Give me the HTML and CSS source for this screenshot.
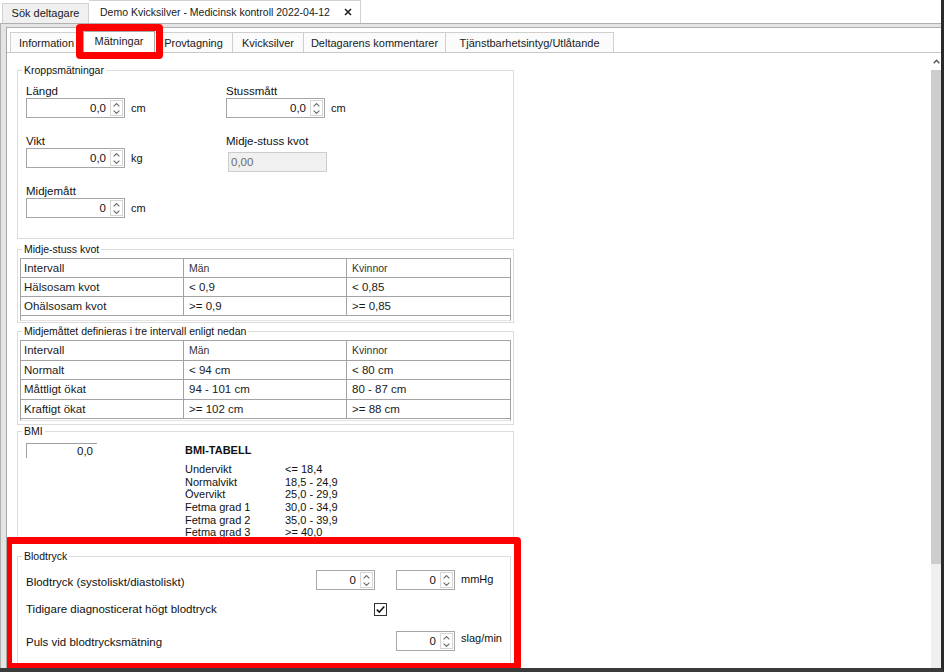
FILE: index.html
```html
<!DOCTYPE html>
<html lang="sv">
<head>
<meta charset="utf-8">
<title>Mätningar</title>
<link rel="stylesheet" href="styles.css">
</head>
<body>
<div class="app">
  <div class="doc-tabs">
    <div class="doc-tab search">Sök deltagare</div>
    <div class="doc-tab active"><span class="doc-title">Demo Kvicksilver - Medicinsk kontroll 2022-04-12</span>
      <svg class="close" width="8" height="8" viewBox="0 0 8 8"><path d="M1 1L7 7M7 1L1 7" stroke="#222" stroke-width="1.6" fill="none"/></svg>
    </div>
  </div>
  <div class="doc-body">
    <div class="inner">
      <div class="tabs">
        <div class="tab t-info">Information</div>
        <div class="tab t-mat active">Mätningar</div>
        <div class="tab t-prov">Provtagning</div>
        <div class="tab t-kvick">Kvicksilver</div>
        <div class="tab t-delt">Deltagarens kommentarer</div>
        <div class="tab t-tjan">Tjänstbarhetsintyg/Utlåtande</div>
      </div>
      <div class="page">
        <div class="content">
          <fieldset class="group kropp">
            <legend>Kroppsmätningar</legend>
            <div class="kropp-grid">
              <div class="field">
                <div class="lbl">Längd</div>
                <div class="spin">
                  <div class="spinbox w99"><span class="val">0,0</span><span class="arrows"><span><svg width="7" height="4" viewBox="0 0 7 4"><path d="M0.6 3.4L3.5 0.6L6.4 3.4" fill="none" stroke="#666" stroke-width="1.1"/></svg></span><span><svg width="7" height="4" viewBox="0 0 7 4"><path d="M0.6 0.6L3.5 3.4L6.4 0.6" fill="none" stroke="#666" stroke-width="1.1"/></svg></span></span></div>
                  <span class="unit">cm</span>
                </div>
              </div>
              <div class="field">
                <div class="lbl">Stussmått</div>
                <div class="spin">
                  <div class="spinbox w99"><span class="val">0,0</span><span class="arrows"><span><svg width="7" height="4" viewBox="0 0 7 4"><path d="M0.6 3.4L3.5 0.6L6.4 3.4" fill="none" stroke="#666" stroke-width="1.1"/></svg></span><span><svg width="7" height="4" viewBox="0 0 7 4"><path d="M0.6 0.6L3.5 3.4L6.4 0.6" fill="none" stroke="#666" stroke-width="1.1"/></svg></span></span></div>
                  <span class="unit">cm</span>
                </div>
              </div>
              <div class="field">
                <div class="lbl">Vikt</div>
                <div class="spin">
                  <div class="spinbox w99"><span class="val">0,0</span><span class="arrows"><span><svg width="7" height="4" viewBox="0 0 7 4"><path d="M0.6 3.4L3.5 0.6L6.4 3.4" fill="none" stroke="#666" stroke-width="1.1"/></svg></span><span><svg width="7" height="4" viewBox="0 0 7 4"><path d="M0.6 0.6L3.5 3.4L6.4 0.6" fill="none" stroke="#666" stroke-width="1.1"/></svg></span></span></div>
                  <span class="unit">kg</span>
                </div>
              </div>
              <div class="field">
                <div class="lbl">Midje-stuss kvot</div>
                <div class="ro">0,00</div>
              </div>
              <div class="field">
                <div class="lbl">Midjemått</div>
                <div class="spin">
                  <div class="spinbox w99"><span class="val">0</span><span class="arrows"><span><svg width="7" height="4" viewBox="0 0 7 4"><path d="M0.6 3.4L3.5 0.6L6.4 3.4" fill="none" stroke="#666" stroke-width="1.1"/></svg></span><span><svg width="7" height="4" viewBox="0 0 7 4"><path d="M0.6 0.6L3.5 3.4L6.4 0.6" fill="none" stroke="#666" stroke-width="1.1"/></svg></span></span></div>
                  <span class="unit">cm</span>
                </div>
              </div>
            </div>
          </fieldset>

          <fieldset class="group kvot">
            <legend>Midje-stuss kvot</legend>
            <div class="grid g-kvot">
              <div class="row head"><div>Intervall</div><div class="sm">Män</div><div class="sm">Kvinnor</div></div>
              <div class="row"><div>Hälsosam kvot</div><div>&lt; 0,9</div><div>&lt; 0,85</div></div>
              <div class="row"><div>Ohälsosam kvot</div><div>&gt;= 0,9</div><div>&gt;= 0,85</div></div>
            </div>
          </fieldset>

          <fieldset class="group midje">
            <legend>Midjemåttet definieras i tre intervall enligt nedan</legend>
            <div class="grid g-midje">
              <div class="row head"><div>Intervall</div><div class="sm">Män</div><div class="sm">Kvinnor</div></div>
              <div class="row"><div>Normalt</div><div>&lt; 94 cm</div><div>&lt; 80 cm</div></div>
              <div class="row"><div>Måttligt ökat</div><div>94 - 101 cm</div><div>80 - 87 cm</div></div>
              <div class="row"><div>Kraftigt ökat</div><div>&gt;= 102 cm</div><div>&gt;= 88 cm</div></div>
            </div>
          </fieldset>

          <div class="bmi-clip">
            <fieldset class="group bmi">
              <legend>BMI</legend>
              <div class="bmi-row">
                <div class="bmi-val">0,0</div>
                <div class="bmi-table">
                  <div class="bmi-title">BMI-TABELL</div>
                  <div class="bmi-list">
                    <span>Undervikt</span><span>&lt;= 18,4</span>
                    <span>Normalvikt</span><span>18,5 - 24,9</span>
                    <span>Övervikt</span><span>25,0 - 29,9</span>
                    <span>Fetma grad 1</span><span>30,0 - 34,9</span>
                    <span>Fetma grad 2</span><span>35,0 - 39,9</span>
                    <span>Fetma grad 3</span><span>&gt;= 40,0</span>
                  </div>
                </div>
              </div>
            </fieldset>
          </div>

          <div class="bp-frame">
            <fieldset class="group bp">
              <legend>Blodtryck</legend>
              <div class="bp-row r1">
                <span class="bp-lbl l1">Blodtryck (systoliskt/diastoliskt)</span>
                <div class="spinbox w59"><span class="val">0</span><span class="arrows"><span><svg width="7" height="4" viewBox="0 0 7 4"><path d="M0.6 3.4L3.5 0.6L6.4 3.4" fill="none" stroke="#666" stroke-width="1.1"/></svg></span><span><svg width="7" height="4" viewBox="0 0 7 4"><path d="M0.6 0.6L3.5 3.4L6.4 0.6" fill="none" stroke="#666" stroke-width="1.1"/></svg></span></span></div>
                <div class="spinbox w59 second"><span class="val">0</span><span class="arrows"><span><svg width="7" height="4" viewBox="0 0 7 4"><path d="M0.6 3.4L3.5 0.6L6.4 3.4" fill="none" stroke="#666" stroke-width="1.1"/></svg></span><span><svg width="7" height="4" viewBox="0 0 7 4"><path d="M0.6 0.6L3.5 3.4L6.4 0.6" fill="none" stroke="#666" stroke-width="1.1"/></svg></span></span></div>
                <span class="bp-unit u1">mmHg</span>
              </div>
              <div class="bp-row r2">
                <span class="bp-lbl l2">Tidigare diagnosticerat högt blodtryck</span>
                <span class="check"><svg width="11" height="11" viewBox="0 0 11 11"><path d="M1.8 5.6L4.3 8.1L9.3 2.6" fill="none" stroke="#111" stroke-width="1.5"/></svg></span>
              </div>
              <div class="bp-row r3">
                <span class="bp-lbl l3">Puls vid blodtrycksmätning</span>
                <div class="spinbox w59"><span class="val">0</span><span class="arrows"><span><svg width="7" height="4" viewBox="0 0 7 4"><path d="M0.6 3.4L3.5 0.6L6.4 3.4" fill="none" stroke="#666" stroke-width="1.1"/></svg></span><span><svg width="7" height="4" viewBox="0 0 7 4"><path d="M0.6 0.6L3.5 3.4L6.4 0.6" fill="none" stroke="#666" stroke-width="1.1"/></svg></span></span></div>
                <span class="bp-unit u3">slag/min</span>
              </div>
            </fieldset>
          </div>
        </div>
        <div class="scrollbar">
          <div class="sb-up"><svg width="7" height="5" viewBox="0 0 7 5"><path d="M0.7 4.2L3.5 1.2L6.3 4.2" fill="none" stroke="#555" stroke-width="1.4"/></svg></div>
          <div class="sb-thumb"></div>
          <div class="sb-track"></div>
        </div>
      </div>
    </div>
  </div>
  <div class="hl-tab"></div>
</div>
</body>
</html>
```

FILE: styles.css
```css
html, body {
  margin: 0;
  padding: 0;
  background: #fff;
}
body {
  font-family: "Liberation Sans", Arial, sans-serif;
  color: #111;
}
.app {
  position: relative;
  width: 944px;
  height: 672px;
  box-sizing: border-box;
  border-right: 3px solid #2a2a2a;
  border-bottom: 4px solid #3a3a3a;
  display: flex;
  flex-direction: column;
  overflow: hidden;
  background: #fff;
}

/* document tabs */
.doc-tabs {
  height: 23px;
  display: flex;
  align-items: flex-end;
  padding-left: 2px;
  flex: none;
}
.doc-tab {
  box-sizing: border-box;
  height: 20px;
  border: 1px solid #d2d2d2;
  border-bottom: 0;
  background: #f0f0f0;
  font-size: 11px;
  line-height: 19px;
  color: #1a1a1a;
  white-space: nowrap;
}
.doc-tab.search {
  width: 87px;
  text-align: center;
}
.doc-tab.active {
  width: 272px;
  height: 23px;
  background: #fff;
  border-left: 0;
  padding-left: 11px;
  display: flex;
  align-items: center;
  font-size: 10.5px;
}
.doc-title {
  line-height: 14px;
  flex: none;
}
.close {
  flex: none;
  margin-left: 14px;
}

.doc-body {
  flex: 1;
  min-height: 0;
  display: flex;
  flex-direction: column;
  border-top: 1px solid #b0b0b0;
  border-left: 1px solid #b0b0b0;
  background: #e4e4e4;
  padding: 3px 0 0 5px;
}
.inner {
  flex: 1;
  min-height: 0;
  display: flex;
  flex-direction: column;
  border-top: 1px solid #b0b0b0;
  border-left: 1px solid #a8a8a8;
  background: #fff;
}

/* inner tabs */
.tabs {
  flex: none;
  height: 24px;
  border-bottom: 1px solid #c9c9c9;
  display: flex;
  align-items: flex-end;
  padding-left: 3px;
}
.tab {
  box-sizing: border-box;
  height: 20px;
  border: 1px solid #cfcfcf;
  border-left: 0;
  border-bottom: 0;
  background: #fbfbfb;
  font-size: 11px;
  line-height: 20px;
  text-align: center;
  color: #1a1a1a;
  white-space: nowrap;
}
.tab:first-child {
  border-left: 1px solid #cfcfcf;
}
.tab.active {
  height: 22px;
  margin-bottom: -1px;
  background: #fff;
  border: 1px solid #a9a9a9;
  border-bottom: 0;
  line-height: 19px;
  position: relative;
}
.t-info { width: 73px; }
.t-mat { width: 72px; }
.t-prov { width: 78px; border-left: 0; }
.t-kvick { width: 71px; }
.t-delt { width: 142px; }
.t-tjan { width: 168px; }

/* page */
.page {
  flex: 1;
  min-height: 0;
  display: flex;
}
.content {
  flex: 1;
  min-width: 0;
  padding: 11px 0 0 10px;
  overflow: hidden;
}
.scrollbar {
  flex: none;
  width: 10px;
  display: flex;
  flex-direction: column;
}
.sb-up {
  height: 17px;
  display: flex;
  align-items: center;
  justify-content: center;
  padding-left: 1px;
}
.sb-thumb {
  height: 494px;
  background: #cdcdcd;
}
.sb-track {
  flex: 1;
  background: #f0f0f0;
}

/* group boxes */
.group {
  box-sizing: border-box;
  width: 497px;
  margin: 0;
  border: 1px solid #dcdcdc;
  padding: 0 2px;
  min-width: 0;
}
.group legend {
  margin-left: 2px;
  padding: 0 2px;
  font-size: 10.5px;
  line-height: 13px;
  color: #111;
}

.kropp {
  padding-top: 7px;
  padding-bottom: 20px;
}
.kropp-grid {
  display: grid;
  grid-template-columns: 200px 1fr;
  row-gap: 16px;
  padding-left: 6px;
}
.lbl {
  font-size: 11.5px;
  line-height: 14px;
  color: #111;
}
.spin {
  display: flex;
  align-items: center;
}
.unit {
  font-size: 11px;
  margin-left: 6px;
  color: #111;
}
.spinbox {
  box-sizing: border-box;
  height: 20px;
  display: flex;
  align-items: center;
  border: 1px solid #a6a6a6;
  background: #fff;
  flex: none;
}
.w99 { width: 99px; }
.w59 { width: 59px; }
.spinbox .val {
  flex: 1;
  text-align: right;
  padding-right: 4px;
  font-size: 11.5px;
  line-height: 18px;
  color: #111;
}
.arrows {
  box-sizing: border-box;
  width: 13px;
  height: 16px;
  border: 1px solid #d6d6d6;
  margin-right: 1px;
  display: flex;
  flex-direction: column;
}
.arrows span {
  flex: 1;
  display: flex;
  align-items: center;
  justify-content: center;
}
.ro {
  box-sizing: border-box;
  width: 99px;
  height: 20px;
  margin: 4px 0 -4px 2px;
  background: #f0f0f0;
  border: 1px solid #cccccc;
  color: #6d6d6d;
  font-size: 11.5px;
  line-height: 18px;
  padding-left: 2px;
}

/* list tables */
.kvot {
  margin-top: 4px;
  padding-top: 2px;
  padding-bottom: 1px;
}
.midje {
  margin-top: 2px;
  padding-top: 2px;
  padding-bottom: 3px;
}
.grid {
  box-sizing: border-box;
  border: 1px solid #a3a3a3;
  border-bottom: 1px solid #e2e2e2;
}
.g-kvot { height: 63px; }
.g-midje { height: 81px; }
.row {
  display: grid;
  grid-template-columns: 163px 163px 1fr;
  box-sizing: border-box;
  height: 19px;
  border-bottom: 1px solid #a3a3a3;
}
.g-midje .row { height: 19.5px; }
.row > div {
  border-right: 1px solid #a3a3a3;
  padding-left: 5px;
  font-size: 11.5px;
  line-height: 18px;
  color: #1a1a1a;
  white-space: nowrap;
}
.row > div:first-child { padding-left: 3px; }
.row > div:last-child { border-right: 0; }
.row > div.sm {
  font-size: 10.5px;
  color: #333;
}

/* BMI */
.bmi-clip {
  height: 112px;
  overflow: hidden;
}
.bmi {
  height: 140px;
  padding-top: 5px;
}
.bmi-row {
  display: flex;
  align-items: flex-start;
}
.bmi-val {
  box-sizing: border-box;
  width: 71px;
  height: 15px;
  margin-left: 6px;
  border-top: 1px solid #a0a0a0;
  border-left: 1px solid #a0a0a0;
  text-align: right;
  padding-right: 4px;
  font-size: 11.5px;
  line-height: 15px;
  color: #111;
}
.bmi-table {
  margin-left: 88px;
}
.bmi-title {
  font-weight: bold;
  font-size: 11px;
  line-height: 14px;
  color: #111;
}
.bmi-list {
  margin-top: 6px;
  display: grid;
  grid-template-columns: 100px auto;
  font-size: 11px;
  line-height: 12.67px;
  color: #111;
}

/* Blodtryck */
.bp-frame {
  box-sizing: border-box;
  width: 516px;
  height: 133px;
  margin-left: -12px;
  border: 7px solid #ff0000;
  border-radius: 4px;
  padding: 6px 0 0 5px;
  overflow: hidden;
  background: #fff;
}
.bp {
  width: 494px;
  height: 122px;
  padding-top: 7px;
}
.bp-row {
  display: flex;
  padding-left: 6px;
}
.bp-lbl {
  font-size: 11.5px;
  color: #111;
  flex: none;
  white-space: nowrap;
}
.r1 { height: 20px; }
.l1 { width: 290px; align-self: flex-end; line-height: 16px; }
.second { margin-left: 21px; }
.bp-unit {
  font-size: 11px;
  margin-left: 6px;
  color: #111;
  line-height: 14px;
}
.u1 { align-self: center; margin-bottom: 3px; }
.r2 { height: 13px; margin-top: 13px; align-items: center; }
.l2 { width: 348px; line-height: 13px; }
.check {
  box-sizing: border-box;
  width: 13px;
  height: 13px;
  border: 1px solid #333;
  background: #fff;
  display: flex;
  align-items: center;
  justify-content: center;
}
.r3 { height: 20px; margin-top: 15px; }
.l3 { width: 370px; align-self: flex-end; line-height: 17px; }
.u3 { align-self: flex-end; margin-bottom: 6px; }

/* annotation overlay around the active tab */
.hl-tab {
  position: absolute;
  left: 76px;
  top: 24px;
  width: 87px;
  height: 35px;
  box-sizing: border-box;
  border: 7px solid #ff0000;
  border-radius: 4px;
}
```
